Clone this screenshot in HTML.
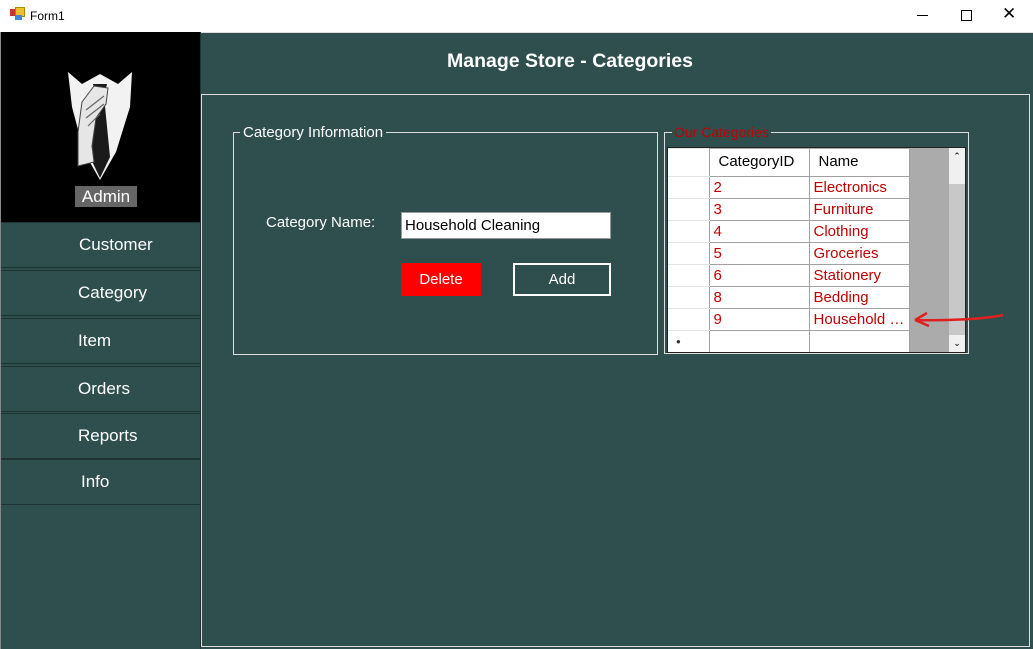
<!DOCTYPE html>
<html><head><style>
body{margin:0;width:1033px;height:649px;overflow:hidden;background:#2f4f4f;font-family:"Liberation Sans",sans-serif;position:relative}
.a{position:absolute}
.tb{left:0;top:0;width:1033px;height:32px;background:#fff;border-bottom:1px solid #ddd}
.nav{left:1px;width:199px;height:46px;border-top:1px solid #1e3333;border-bottom:1px solid #1e3333;color:#fff;font-size:17px;line-height:44px;box-sizing:border-box}
table{border-collapse:collapse;font-size:15px}
td{border:1px solid #a0a0a0;height:22px;padding:0 4px;color:#c00000;background:#fff;box-sizing:border-box;line-height:20px}
td.h{border-left:none;border-color:#e4e4e4 #a0a0a0 #e4e4e4 #fff}
</style></head><body>
<div class="a tb">
 <div class="a" style="left:10px;top:9px;width:7px;height:7px;background:#c33"></div>
 <div class="a" style="left:15px;top:7px;width:8px;height:8px;background:#f0c030;border:1px solid #a80"></div>
 <div class="a" style="left:15px;top:15px;width:7px;height:5px;background:#48c"></div>
 <div class="a" style="left:30px;top:9px;font-size:12px">Form1</div>
 <div class="a" style="left:917px;top:15px;width:11px;height:1px;background:#000"></div>
 <div class="a" style="left:961px;top:10px;width:9px;height:9px;border:1px solid #000"></div>
 <div class="a" style="left:1002px;top:4px;font-size:17px">✕</div>
</div>
<div class="a" style="left:1px;top:32px;width:199px;height:190px;background:#000"></div>
<svg class="a" style="left:60px;top:62px" width="80" height="120" viewBox="0 0 80 120">
<path d="M8 10 L22 22 L40 12 L58 22 L72 10 L70 45 L56 90 L40 118 L24 90 L12 45 Z" fill="#f2f2f2"/>
<path d="M33 22 L47 22 L44 34 L50 95 L40 116 L30 95 L36 34 Z" fill="#1a1a1a"/>
<path d="M22 40 L34 24 L48 26 L46 42 L36 56 L32 84 L34 100 L18 104 L18 70 Z" fill="#e6e6e6" stroke="#444" stroke-width="1"/>
<path d="M26 48 L44 34 M26 56 L44 42 M28 64 L40 52" stroke="#666" stroke-width="1.2"/>
</svg>
<div class="a" style="left:75px;top:186px;width:62px;height:21px;background:#666;color:#fff;font-size:17px;text-align:center;line-height:21px">Admin</div>
<div class="a nav" style="top:222px;padding-left:78px">Customer</div>
<div class="a nav" style="top:270px;padding-left:77px">Category</div>
<div class="a nav" style="top:318px;padding-left:77px">Item</div>
<div class="a nav" style="top:366px;padding-left:77px">Orders</div>
<div class="a nav" style="top:413px;padding-left:77px">Reports</div>
<div class="a nav" style="top:459px;padding-left:80px">Info</div>
<div class="a" style="left:0;top:32px;width:1px;height:617px;background:#888"></div>
<div class="a" style="left:200px;top:32px;width:1px;height:617px;background:#1e3333"></div>
<div class="a" style="left:447px;top:50px;color:#fff;font-weight:bold;font-size:19.5px">Manage Store - Categories</div>
<div class="a" style="left:201px;top:94px;width:827px;height:551px;border:1px solid #ddd"></div>
<div class="a" style="left:233px;top:132px;width:423px;height:221px;border:1px solid #ddd"></div>
<div class="a" style="left:240px;top:124px;background:#2f4f4f;color:#fff;font-size:15px;padding:0 3px">Category Information</div>
<div class="a" style="left:266px;top:214px;color:#fff;font-size:15px">Category Name:</div>
<div class="a" style="left:401px;top:212px;width:210px;height:27px;background:#fff;border:1px solid #999;box-sizing:border-box;font-size:15px;line-height:26px;padding-left:3px">Household Cleaning</div>
<div class="a" style="left:401px;top:263px;width:80px;height:33px;background:#f00;color:#fff;font-size:15px;text-align:center;line-height:33px">Delete</div>
<div class="a" style="left:513px;top:263px;width:98px;height:33px;border:2px solid #fff;box-sizing:border-box;color:#fff;font-size:15px;text-align:center;line-height:29px">Add</div>
<div class="a" style="left:664px;top:132px;width:305px;height:222px;border:1px solid #ddd;box-sizing:border-box"></div>
<div class="a" style="left:672px;top:124px;background:#2f4f4f;color:#c00000;font-size:14px;padding:0 2px">Our Categories</div>
<div class="a" style="left:667px;top:147px;width:299px;height:206px;background:#ababab;border:1px solid #222;box-sizing:border-box;overflow:hidden">
<table class="a" style="left:0;top:0">
<tr><td class="h" style="width:41px;height:28px"></td><td style="width:100px;color:#000;padding-left:9px;height:28px;border-top:none">CategoryID</td><td style="width:100px;color:#000;padding-left:9px;height:28px;border-top:none">Name</td></tr>
<tr><td class="h"></td><td>2</td><td>Electronics</td></tr>
<tr><td class="h"></td><td>3</td><td>Furniture</td></tr>
<tr><td class="h"></td><td>4</td><td>Clothing</td></tr>
<tr><td class="h"></td><td>5</td><td>Groceries</td></tr>
<tr><td class="h"></td><td>6</td><td>Stationery</td></tr>
<tr><td class="h"></td><td>8</td><td>Bedding</td></tr>
<tr><td class="h"></td><td>9</td><td>Household …</td></tr>
<tr><td class="h" style="font-size:8px;color:#333;padding-left:8px">●</td><td></td><td></td></tr>
</table>
<div class="a" style="left:281px;top:0;width:16px;height:204px;background:#c8c8c8"></div>
<div class="a" style="left:281px;top:0;width:16px;height:36px;background:#f0f0f0;font-size:9px;text-align:center;line-height:16px">⌃</div>
<div class="a" style="left:281px;top:187px;width:16px;height:17px;background:#f0f0f0;font-size:9px;text-align:center;line-height:17px">⌄</div>
</div>
<svg class="a" style="left:905px;top:305px" width="100" height="30"><path d="M98 10 C80 14 40 16 10 15 M10 15 L22 8 M10 15 L24 21" stroke="#e02020" stroke-width="2.5" fill="none"/></svg>
</body></html>
